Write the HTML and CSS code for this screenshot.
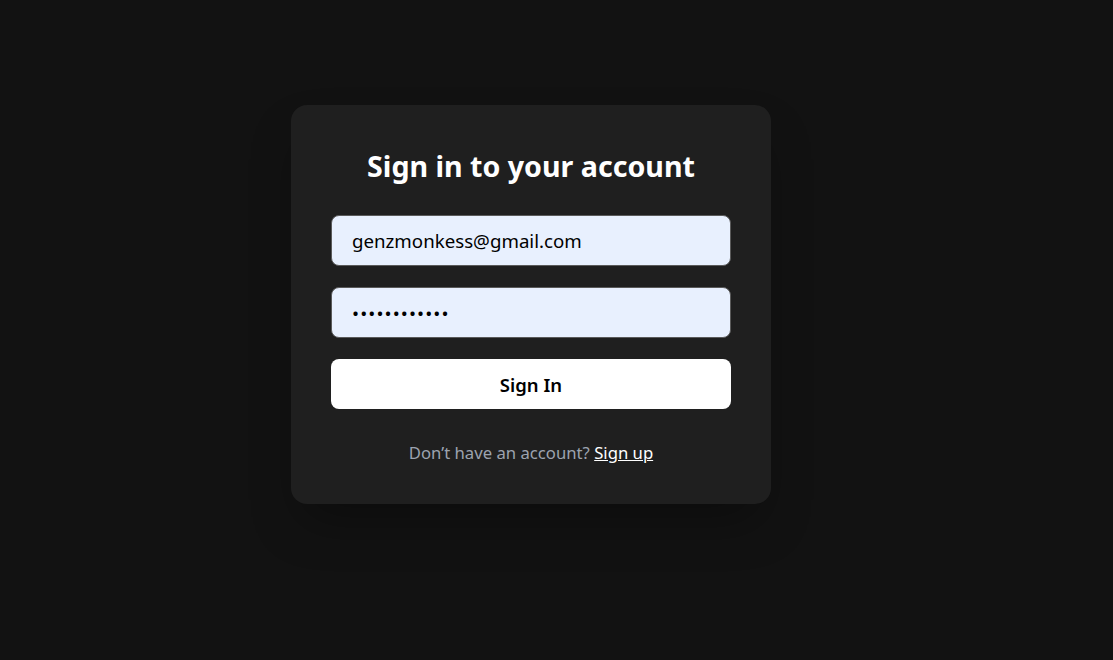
FILE: index.html
```html
<!DOCTYPE html>
<html lang="en">
<head>
<meta charset="utf-8">
<title>Sign in</title>
<link rel="stylesheet" href="styles.css">
</head>
<body>
<main class="page">
  <form class="card" onsubmit="return false">
    <h1 class="title">Sign in to your account</h1>
    <input class="field" type="email" value="genzmonkess@gmail.com">
    <input class="field field-pass" type="password" value="abcdefghijkl">
    <button class="btn" type="submit">Sign In</button>
    <p class="footer">Don’t have an account? <a class="link" href="#">Sign up</a></p>
  </form>
</main>
</body>
</html>
```
FILE: styles.css
```css
html, body {
  margin: 0;
  height: 100%;
  background: #121212;
}
body {
  font-family: "Noto Sans", "Open Sans", sans-serif;
}
.page {
  display: flex;
  justify-content: center;
  align-items: flex-start;
  padding: 105px 51px 0 0;
  box-sizing: border-box;
  min-height: 100%;
}
.card {
  width: 480px;
  box-sizing: border-box;
  padding: 42px 40px 39px;
  background: #1f1f1f;
  border-radius: 16px;
  box-shadow: 0 25px 50px -12px rgba(0, 0, 0, 0.35);
  display: flex;
  flex-direction: column;
}
.title {
  margin: 0 0 30px;
  color: #ffffff;
  font-size: 28.6px;
  line-height: 38px;
  font-weight: 700;
  text-align: center;
}
.field {
  height: 51px;
  box-sizing: border-box;
  margin: 0 0 21px;
  padding: 0 20px;
  border: 1px solid #5a5a5a;
  border-radius: 8px;
  background: #e8f0fe;
  color: #000;
  font-family: inherit;
  font-size: 18.7px;
  outline: none;
}
.field-pass {
  letter-spacing: 1.1px;
}
.btn {
  height: 50px;
  margin: 0;
  border: none;
  border-radius: 8px;
  background: #ffffff;
  color: #000;
  font-family: inherit;
  font-size: 18.5px;
  font-weight: 600;
  cursor: pointer;
}
.footer {
  margin: 32px 0 0;
  text-align: center;
  color: #9ca3af;
  font-size: 16.7px;
  line-height: 24px;
}
.link {
  color: #ffffff;
  text-decoration: underline;
}
```
